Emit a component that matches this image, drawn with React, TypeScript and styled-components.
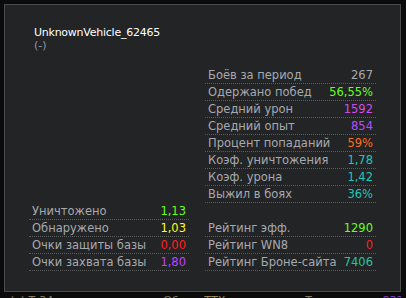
import styled, { createGlobalStyle } from "styled-components";

const GlobalStyle = createGlobalStyle`
  html, body {
    margin: 0;
    padding: 0;
    background: #0b0b0b;
  }
  body {
    font-family: "DejaVu Sans", Verdana, sans-serif;
    width: 406px;
    height: 298px;
    overflow: hidden;
  }
`;

const Screen = styled.div`
  padding: 4px 5px 0 4px;
  display: flex;
  flex-direction: column;
  gap: 1px;
`;

const Panel = styled.div`
  height: 288px;
  box-sizing: border-box;
  background: #232426;
  border: 1px solid #4b4c4e;
  padding: 18px 24px 0 24px;
  display: flex;
  flex-direction: column;
`;

const Header = styled.div`
  padding-left: 5px;
  height: 44px;
`;

const Title = styled.div`
  color: #ffffff;
  font-size: 11px;
  line-height: 13px;
  letter-spacing: -0.25px;
  padding-top: 3px;
`;

const Subtitle = styled.div`
  color: #8f96a0;
  font-size: 11px;
  line-height: 13px;
`;

const Columns = styled.div`
  display: flex;
  align-items: flex-end;
  gap: 16px;
`;

const Column = styled.div<{ $width: number }>`
  width: ${(p) => p.$width}px;
  display: flex;
  flex-direction: column;
`;

const Row = styled.div`
  height: 17px;
  box-sizing: border-box;
  border-bottom: 1px dotted #5a5b5d;
  display: flex;
  justify-content: space-between;
  align-items: center;
  padding: 0 3px;
`;

const Spacer = styled.div`
  height: 17px;
`;

const Label = styled.span`
  color: #a6a9ae;
  font-size: 11.5px;
  white-space: nowrap;
`;

const Value = styled.span<{ $color: string }>`
  color: ${(p) => p.$color};
  font-size: 11.5px;
`;

const Peek = styled.div`
  height: 6px;
  overflow: hidden;
  display: flex;
  font-size: 11px;
  line-height: 13px;
  padding-top: 1px;
`;

const PeekText = styled.span<{ $left: number; $color: string }>`
  margin-left: ${(p) => p.$left}px;
  color: ${(p) => p.$color};
  white-space: nowrap;
`;

type Stat = [string, string, string];

const mainStats: Stat[] = [
  ["Боёв за период", "267", "#a6a9ae"],
  ["Одержано побед", "56,55%", "#66ff1a"],
  ["Средний урон", "1592", "#d44cf0"],
  ["Средний опыт", "854", "#b14dff"],
  ["Процент попаданий", "59%", "#ff6d1f"],
  ["Коэф. уничтожения", "1,78", "#22c6b4"],
  ["Коэф. урона", "1,42", "#22c6b4"],
  ["Выжил в боях", "36%", "#22c6b4"],
];

const ratings: Stat[] = [
  ["Рейтинг эфф.", "1290", "#66ff1a"],
  ["Рейтинг WN8", "0", "#ff2020"],
  ["Рейтинг Броне-сайта", "7406", "#22c6a4"],
];

const perBattle: Stat[] = [
  ["Уничтожено", "1,13", "#66ff1a"],
  ["Обнаружено", "1,03", "#ffff1a"],
  ["Очки защиты базы", "0,00", "#ff2020"],
  ["Очки захвата базы", "1,80", "#c040ff"],
];

function StatRow({ stat }: { stat: Stat }) {
  const [label, value, color] = stat;
  return (
    <Row>
      <Label>{label}</Label>
      <Value $color={color}>{value}</Value>
    </Row>
  );
}

export default function App() {
  return (
    <>
      <GlobalStyle />
      <Screen>
        <Panel>
          <Header>
            <Title>UnknownVehicle_62465</Title>
            <Subtitle>(-)</Subtitle>
          </Header>
          <Columns>
            <Column $width={160}>
              {perBattle.map((s) => (
                <StatRow key={s[0]} stat={s} />
              ))}
            </Column>
            <Column $width={171}>
              {mainStats.map((s) => (
                <StatRow key={s[0]} stat={s} />
              ))}
              <Spacer />
              {ratings.map((s) => (
                <StatRow key={s[0]} stat={s} />
              ))}
            </Column>
          </Columns>
        </Panel>
        <Peek>
          <PeekText $left={6} $color="#8a7a60">(т) Т-34</PeekText>
          <PeekText $left={110} $color="#8a7a60">Обзор</PeekText>
          <PeekText $left={6} $color="#a08a50">ТТХ</PeekText>
          <PeekText $left={80} $color="#8a7a60">Танк</PeekText>
          <PeekText $left={50} $color="#9040c0">8320</PeekText>
        </Peek>
      </Screen>
    </>
  );
}
